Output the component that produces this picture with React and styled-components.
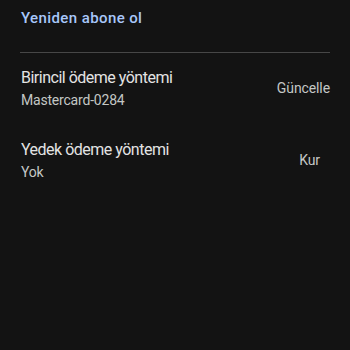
import React from "react";
import styled, { createGlobalStyle } from "styled-components";

const GlobalStyle = createGlobalStyle`
  html, body {
    margin: 0;
    padding: 0;
    background: #131313;
  }
  body {
    font-family: Roboto, "Noto Sans", sans-serif;
  }
`;

const Page = styled.div`
  width: 350px;
  height: 350px;
  background: #131313;
  padding: 0 20px 0 21px;
  box-sizing: border-box;
  display: flex;
  flex-direction: column;
`;

const LinkButton = styled.div`
  color: #a8c7fa;
  font-size: 15px;
  font-weight: 500;
  letter-spacing: 0.4px;
  line-height: 20px;
  padding-top: 8px;
  height: 52px;
  box-sizing: border-box;
`;

const Divider = styled.hr`
  border: none;
  border-top: 1px solid #474747;
  margin: 0 0 0 -1px;
`;

const Row = styled.div`
  display: flex;
  align-items: center;
  justify-content: space-between;
  padding-top: ${(p) => p.top}px;
`;

const Info = styled.div`
  display: flex;
  flex-direction: column;
`;

const Title = styled.div`
  color: #e3e3e3;
  font-size: 16px;
  letter-spacing: -0.5px;
  line-height: 24px;
`;

const Sub = styled.div`
  color: #c4c7c5;
  font-size: 14px;
  letter-spacing: -0.2px;
  line-height: 20px;
`;

const Action = styled.div`
  color: #c4c7c5;
  font-size: 14px;
  letter-spacing: -0.1px;
  line-height: 20px;
  margin-right: ${(p) => p.right || 0}px;
`;

const rows = [
  { title: "Birincil ödeme yöntemi", sub: "Mastercard-0284", action: "Güncelle", top: 13, right: 0 },
  { title: "Yedek ödeme yöntemi", sub: "Yok", action: "Kur", top: 28, right: 10 },
];

export default function App() {
  return (
    <>
      <GlobalStyle />
      <Page>
        <LinkButton>Yeniden abone ol</LinkButton>
        <Divider />
        {rows.map((r) => (
          <Row key={r.title} top={r.top}>
            <Info>
              <Title>{r.title}</Title>
              <Sub>{r.sub}</Sub>
            </Info>
            <Action right={r.right}>{r.action}</Action>
          </Row>
        ))}
      </Page>
    </>
  );
}
